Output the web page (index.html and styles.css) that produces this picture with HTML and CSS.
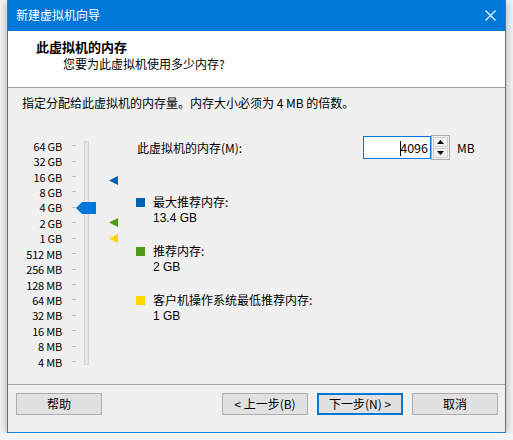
FILE: index.html
```html
<!DOCTYPE html>
<html>
<head>
<meta charset="utf-8">
<link rel="stylesheet" href="styles.css">
</head>
<body>
	<div class="window">
		<div class="titlebar">
			<span class="titletext">新建虚拟机向导</span>
			<svg class="closebtn" width="11" height="11" viewBox="0 0 11 11">
				<path d="M0.5 0.5 L10.5 10.5 M10.5 0.5 L0.5 10.5" stroke="#ffffff" stroke-width="1.1" fill="none"/>
			</svg>
		</div>
		<div class="header">
			<div class="headtitle">此虚拟机的内存</div>
			<div class="headsub">您要为此虚拟机使用多少内存?</div>
		</div>
		<div class="content">
			<div class="desc">指定分配给此虚拟机的内存量。内存大小必须为 4 MB 的倍数。</div>
			<div class="main">
				<div class="slider">
					<div class="track"></div>
					<div class="scale">
						<div class="mark"><span class="lbl">64 GB</span><span class="tick"></span></div>
						<div class="mark"><span class="lbl">32 GB</span><span class="tick"></span></div>
						<div class="mark"><span class="lbl">16 GB</span><span class="tick"></span></div>
						<div class="mark"><span class="lbl">8 GB</span><span class="tick"></span></div>
						<div class="mark"><span class="lbl">4 GB</span><span class="tick"></span></div>
						<div class="mark"><span class="lbl">2 GB</span><span class="tick"></span></div>
						<div class="mark"><span class="lbl">1 GB</span><span class="tick"></span></div>
						<div class="mark"><span class="lbl">512 MB</span><span class="tick"></span></div>
						<div class="mark"><span class="lbl">256 MB</span><span class="tick"></span></div>
						<div class="mark"><span class="lbl">128 MB</span><span class="tick"></span></div>
						<div class="mark"><span class="lbl">64 MB</span><span class="tick"></span></div>
						<div class="mark"><span class="lbl">32 MB</span><span class="tick"></span></div>
						<div class="mark"><span class="lbl">16 MB</span><span class="tick"></span></div>
						<div class="mark"><span class="lbl">8 MB</span><span class="tick"></span></div>
						<div class="mark"><span class="lbl">4 MB</span><span class="tick"></span></div>
					</div>
					<svg class="thumb" width="20" height="12" viewBox="0 0 20 12">
						<path d="M0 6 L6 0 L20 0 L20 12 L6 12 Z" fill="#0078d7"/>
					</svg>
					<svg class="pointer pmax" width="9" height="9" viewBox="0 0 9 9">
						<path d="M0 4.5 L9 0 L9 9 Z" fill="#0063b1"/>
					</svg>
					<svg class="pointer prec" width="9" height="9" viewBox="0 0 9 9">
						<path d="M0 4.5 L9 0 L9 9 Z" fill="#4c9a15"/>
					</svg>
					<svg class="pointer pmin" width="9" height="9" viewBox="0 0 9 9">
						<path d="M0 4.5 L9 0 L9 9 Z" fill="#fcd400"/>
					</svg>
				</div>
				<div class="info">
					<div class="memrow">
						<span class="memlabel">此虚拟机的内存(M):</span>
						<div class="membox"><span class="caret"></span>4096</div>
						<div class="spinner">
							<div class="spinbtn">
								<svg width="7" height="4" viewBox="0 0 7 4"><path d="M0 4 L3.5 0 L7 4 Z" fill="#000"/></svg>
							</div>
							<div class="spinbtn">
								<svg width="7" height="4" viewBox="0 0 7 4"><path d="M0 0 L3.5 4 L7 0 Z" fill="#000"/></svg>
							</div>
						</div>
						<span class="unit">MB</span>
					</div>
					<div class="legend">
						<span class="swatch sw-max"></span>
						<div>
							<div>最大推荐内存:</div>
							<div class="value">13.4 GB</div>
						</div>
					</div>
					<div class="legend">
						<span class="swatch sw-rec"></span>
						<div>
							<div>推荐内存:</div>
							<div class="value">2 GB</div>
						</div>
					</div>
					<div class="legend">
						<span class="swatch sw-min"></span>
						<div>
							<div>客户机操作系统最低推荐内存:</div>
							<div class="value">1 GB</div>
						</div>
					</div>
				</div>
			</div>
		</div>
		<div class="footer">
			<div class="btn">帮助</div>
			<div class="navbtns">
				<div class="btn">&lt; 上一步(B)</div>
				<div class="btn default">下一步(N) &gt;</div>
				<div class="btn">取消</div>
			</div>
		</div>
	</div>
</body>
</html>
```

FILE: styles.css
```css
body {
	margin: 0px;
	background-color: #f4f4f4;
	font-family: "Noto Sans CJK SC", "Noto Sans", sans-serif;
	font-size: 12px;
	color: #000000;
}
.window {
	margin-left: 7px;
	width: 497px;
	height: 432px;
	border: 1px solid #1883d7;
	border-top: none;
	background-color: #f0f0f0;
	box-shadow: 0 2px 9px rgba(0, 0, 0, 0.3);
	display: flex;
	flex-direction: column;
}
.titlebar {
	height: 31px;
	background-color: #0078d7;
	color: #ffffff;
	display: flex;
	align-items: center;
	justify-content: space-between;
	padding: 0 9px 0 8px;
}
.titletext {
	line-height: 16px;
	margin-top: -1px;
}
.closebtn {
	display: block;
	margin-top: -1px;
}

.header {
	height: 56px;
	background-color: #ffffff;
	border-bottom: 1px solid #a0a0a0;
}
.headtitle {
	font-weight: bold;
	font-size: 13px;
	line-height: 16px;
	padding: 8px 0 0 28px;
}
.headsub {
	line-height: 16px;
	padding: 1px 0 0 55px;
}

.content {
	flex: 1;
}
.desc {
	line-height: 16px;
	padding: 7px 0 0 14px;
}
.main {
	display: flex;
	margin-top: 25px;
}
.slider {
	position: relative;
	width: 128px;
	height: 230px;
}
.scale {
	padding-top: 2px;
}
.mark {
	display: flex;
	align-items: center;
	height: 15.43px;
}
.lbl {
	width: 54px;
	text-align: right;
	font-size: 11px;
	letter-spacing: -0.2px;
}
.tick {
	margin-left: 10px;
	width: 4px;
	height: 1px;
	background-color: #c0c0c0;
}
.track {
	position: absolute;
	left: 76px;
	top: 5px;
	width: 3px;
	height: 222px;
	background-color: #e7e7e7;
	border: 1px solid #d6d6d6;
}
.thumb {
	position: absolute;
	left: 68px;
	top: 66px;
}
.pointer {
	position: absolute;
	left: 101px;
}
.pmax {
	top: 40px;
}
.prec {
	top: 82px;
}
.pmin {
	top: 98px;
}

.info {
	flex: 1;
}
.memrow {
	display: flex;
	align-items: center;
	height: 23px;
}
.memlabel {
	width: 226px;
	padding-left: 1px;
}
.membox {
	width: 64px;
	height: 21px;
	border: 1px solid #0078d7;
	background-color: #ffffff;
	text-align: right;
	line-height: 21px;
	padding-right: 2px;
	font-size: 12.5px;
}
.caret {
	display: inline-block;
	width: 1px;
	height: 15px;
	background-color: #000000;
	vertical-align: -3px;
	margin-right: -1px;
}
.spinner {
	width: 15px;
	height: 21px;
	border: 1px solid #adadad;
	padding: 1px;
	display: flex;
	flex-direction: column;
	gap: 1px;
}
.spinbtn {
	flex: 1;
	background-color: #f0f0f0;
	border: 1px solid #d0d0d0;
	display: flex;
	align-items: center;
	justify-content: center;
}
.spinbtn svg {
	display: block;
}
.unit {
	margin-left: 7px;
}

.legend {
	display: flex;
	align-items: flex-start;
	line-height: 16px;
	margin-top: 17px;
}
.legend:nth-child(2) {
	margin-top: 35px;
}
.value {
	font-family: "Liberation Sans", Arial, sans-serif;
}
.swatch {
	width: 9px;
	height: 9px;
	margin: 4px 8px 0 0;
}
.sw-max {
	background-color: #0063b1;
}
.sw-rec {
	background-color: #4c9a15;
}
.sw-min {
	background-color: #fcd800;
}

.footer {
	height: 39px;
	border-top: 1px solid #a0a0a0;
	display: flex;
	justify-content: space-between;
	align-items: flex-start;
	padding: 8px 7px 0 8px;
}
.navbtns {
	display: flex;
	gap: 9px;
}
.btn {
	width: 84px;
	height: 20px;
	line-height: 20px;
	text-align: center;
	background-color: #e1e1e1;
	border: 1px solid #adadad;
}
.default {
	width: 82px;
	height: 18px;
	line-height: 18px;
	border: 2px solid #0078d7;
}
```
